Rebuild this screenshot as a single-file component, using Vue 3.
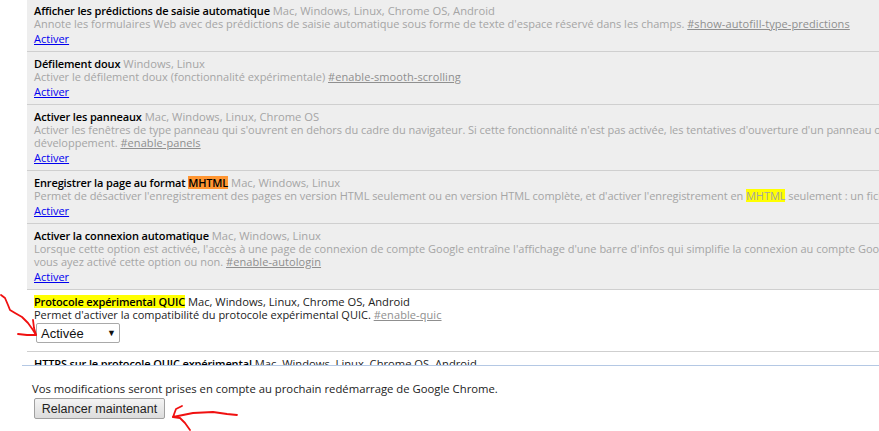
<script setup>
const flags = [
  { name: 'Afficher les prédictions de saisie automatique', os: 'Mac, Windows, Linux, Chrome OS, Android',
    lines: [["Annote les formulaires Web avec des prédictions de saisie automatique sous forme de texte d'espace réservé dans les champs. ", '#show-autofill-type-predictions']] },
  { name: 'Défilement doux', os: 'Windows, Linux',
    lines: [['Activer le défilement doux (fonctionnalité expérimentale) ', '#enable-smooth-scrolling']] },
  { name: 'Activer les panneaux', os: 'Mac, Windows, Linux, Chrome OS', tight: true,
    lines: [["Activer les fenêtres de type panneau qui s'ouvrent en dehors du cadre du navigateur. Si cette fonctionnalité n'est pas activée, les tentatives d'ouverture d'un panneau ouvriront une fenêtre"], ['développement. ', '#enable-panels']] },
  { name: 'Enregistrer la page au format ', hit: 'MHTML', os: 'Mac, Windows, Linux', tight: true,
    lines: [["Permet de désactiver l'enregistrement des pages en version HTML seulement ou en version HTML complète, et d'activer l'enregistrement en ", '', 'MHTML', ' seulement : un fichier']] },
  { name: 'Activer la connexion automatique', os: 'Mac, Windows, Linux',
    lines: [["Lorsque cette option est activée, l'accès à une page de connexion de compte Google entraîne l'affichage d'une barre d'infos qui simplifie la connexion au compte Google, que"], ['vous ayez activé cette option ou non. ', '#enable-autologin']] },
]
</script>

<template>
  <div class="page">
    <div class="scroller">
      <div class="list">
        <div v-for="f in flags" :key="f.name" class="flag off">
          <div class="title">
            <b>{{ f.name }}<mark v-if="f.hit" class="orange">{{ f.hit }}</mark></b>
            <span>{{ ' ' + f.os }}</span>
          </div>
          <div v-for="(l, i) in f.lines" :key="i" class="desc" :class="{ tight: f.tight && i === 0 }">
            {{ l[0] }}<a v-if="l[1]" class="tag">{{ l[1] }}</a><mark v-if="l[2]" class="yellow">{{ l[2] }}</mark>{{ l[3] }}
          </div>
          <a class="action">Activer</a>
        </div>
        <div class="flag on">
          <div class="title">
            <b><mark class="yellow">Protocole expérimental QUIC</mark></b>
            <span> Mac, Windows, Linux, Chrome OS, Android</span>
          </div>
          <div class="desc">Permet d'activer la compatibilité du protocole expérimental QUIC. <a class="tag">#enable-quic</a></div>
          <div class="select"><span>Activée</span><i>▼</i></div>
        </div>
        <div class="flag on">
          <div class="title">
            <b>HTTPS sur le protocole QUIC expérimental</b>
            <span> Mac, Windows, Linux, Chrome OS, Android</span>
          </div>
        </div>
      </div>
    </div>
    <div class="footer">
      <div class="notice">Vos modifications seront prises en compte au prochain redémarrage de Google Chrome.</div>
      <button class="relaunch">Relancer maintenant</button>
    </div>
    <svg class="marks" width="879" height="431" viewBox="0 0 879 431" fill="none" stroke="#f01010" stroke-width="1.8" stroke-linecap="round" stroke-linejoin="round">
      <path d="M1 295 L5 298 L8 305 L10 310 L15 313 L22 317 L28 323 L33 330 L36 335" />
      <path d="M33 320 L34 328 L36 335 L27 335 L18 334" />
      <path d="M237 415 L227 414 L213 412 L193 413 L173 417 L176 409 L182 406" />
      <path d="M173 417 L180 418 L185 423 L190 430" />
    </svg>
  </div>
</template>

<style>
html, body { margin: 0; background: #fff; }
</style>

<style scoped>
.page {
  position: relative;
  width: 879px;
  height: 431px;
  overflow: hidden;
  background: #fff;
  font: 11px/13px "Open Sans", "Noto Sans", sans-serif;
  color: #222;
}
.scroller {
  height: 365px;
  overflow: hidden;
  border-bottom: 1px solid #b4c8e4;
  margin-left: 22px;
  padding-left: 5px;
}
.list { margin-top: -1px; }
.flag {
  padding: 5px 0 6px 7px;
  border-bottom: 1px solid #cfcfcf;
}
.off { background: #eee; color: #a5a5a5; }
.on { padding-bottom: 8px; }
.title { font-size: 11.2px; white-space: nowrap; }
.title b { font-size: 11px; font-weight: 600; letter-spacing: -0.14px; color: #000; }
.desc { white-space: nowrap; }
.desc.tight { letter-spacing: -0.055px; }
.tag { color: #8f8f8f; text-decoration: underline; letter-spacing: 0.08px; }
.action {
  display: block;
  width: fit-content;
  margin-top: 2px;
  color: #0000ee;
  text-decoration: underline;
}
mark { display: inline-block; color: inherit; line-height: 13px; }
.yellow { background: #ffff00; }
.orange { background: #ff9632; }
.select {
  display: flex;
  align-items: center;
  justify-content: space-between;
  box-sizing: border-box;
  width: 84px;
  height: 20px;
  margin: 2px 0 0 2px;
  padding: 0 3px 0 4px;
  border: 1px solid #a9a9a9;
  border-radius: 2px;
  background: #fff;
  font: 13px "Liberation Sans", sans-serif;
  color: #111;
}
.select i { font-style: normal; font-size: 9px; }
.footer { padding: 16px 0 0 32px; }
.notice { font-size: 11.3px; }
.relaunch {
  display: block;
  box-sizing: border-box;
  width: 131px;
  height: 21px;
  margin: 3px 0 0 2px;
  padding: 0;
  border: 1px solid #a0a0a0;
  border-radius: 2px;
  background: linear-gradient(#f4f4f4, #dcdcdc);
  font: 12.5px "Liberation Sans", sans-serif;
  color: #222;
}
.marks { position: absolute; left: 0; top: 0; pointer-events: none; }
</style>
